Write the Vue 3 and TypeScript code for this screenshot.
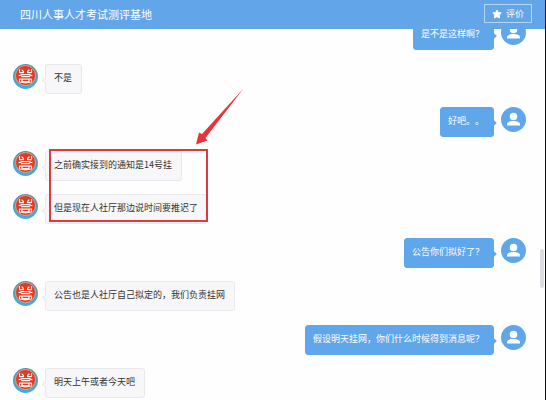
<script setup lang="ts">
interface Message {
  id: number
  from: 'agent' | 'user'
  text: string
}

const title = '四川人事人才考试测评基地'

const messages: Message[] = [
  { id: 1, from: 'user', text: '是不是这样啊？' },
  { id: 2, from: 'agent', text: '不是' },
  { id: 3, from: 'user', text: '好吧。。' },
  { id: 4, from: 'agent', text: '之前确实接到的通知是14号挂' },
  { id: 5, from: 'agent', text: '但是现在人社厅那边说时间要推迟了' },
  { id: 6, from: 'user', text: '公告你们拟好了？' },
  { id: 7, from: 'agent', text: '公告也是人社厅自己拟定的，我们负责挂网' },
  { id: 8, from: 'user', text: '假设明天挂网，你们什么时候得到消息呢？' },
  { id: 9, from: 'agent', text: '明天上午或者今天吧' },
]
</script>

<template>
  <div class="page">
    <header class="header">
      <h1 class="title">{{ title }}</h1>
      <button type="button" class="rate">
        <svg class="star" viewBox="0 0 20 20" aria-hidden="true">
          <path
            d="M10 2 12.600 7l5.900.9-4.300 4.100 1 6L10 15.200 4.800 18l1-6L1.500 7.900 7.400 7Z"
            fill="#fff"
            stroke="#fff"
            stroke-width="2"
            stroke-linejoin="round"
          />
        </svg>
        <span>评价</span>
      </button>
    </header>

    <main class="chat">
      <ul class="messages">
        <li v-for="m in messages" :key="m.id" class="row" :class="m.from">
          <svg v-if="m.from === 'agent'" class="avatar" viewBox="0 0 50 50" aria-hidden="true">
            <defs>
              <linearGradient :id="`ring-${m.id}`" x1="0" y1="0" x2="0" y2="1">
                <stop offset="0" stop-color="#75838f" />
                <stop offset="0.5" stop-color="#5b9dbb" />
                <stop offset="1" stop-color="#3fb0dc" />
              </linearGradient>
            </defs>
            <circle cx="25" cy="25" r="25" :fill="`url(#ring-${m.id})`" />
            <circle cx="25" cy="23" r="20" fill="#de3a24" stroke="#c8a9a0" stroke-width="2" />
            <g fill="none" stroke="#fff0e8" stroke-width="2.500" stroke-linecap="round" stroke-linejoin="round">
              <path d="M13 11v6h8M21 17q0-3-3-5M37 11v6h-8M29 17q0-3 3-5" />
              <path d="M12 23q4 0 6-2h14q2 2 6 2M17 25h16" />
              <path d="M13 35v-5h24v5M18 30v5h14v-5M13 36q12 3 24 0" />
            </g>
          </svg>
          <p class="bubble">{{ m.text }}</p>
          <svg v-if="m.from === 'user'" class="avatar" viewBox="0 0 50 50" aria-hidden="true">
            <circle cx="25" cy="25" r="25" fill="#5fa6ea" />
            <circle cx="25" cy="19" r="7.500" fill="#fff" />
            <path d="M12 37v-3c0-4 7-6 13-6s13 2 13 6v3Z" fill="#fff" />
          </svg>
        </li>
      </ul>

      <div class="highlight"></div>
      <svg class="arrow" viewBox="0 0 48 57" aria-hidden="true">
        <path d="M47.500 0.500 6 46 3 44.500 0 56.500 11.500 52.500 9.500 50Z" fill="#ea3338" />
      </svg>
      <div class="thumb"></div>
    </main>
  </div>
</template>

<style>
body {
  margin: 0;
  background: #fff;
}
</style>

<style scoped>
.page {
  display: flex;
  flex-direction: column;
  box-sizing: border-box;
  min-height: 100vh;
  border-right: 1px solid #111;
  background: #fefefe;
  color: #333;
  font-family: "Noto Sans CJK SC", sans-serif;
  font-size: 9px;
  text-spacing-trim: space-all;
}

.header {
  display: flex;
  align-items: center;
  justify-content: space-between;
  box-sizing: border-box;
  height: 29px;
  padding: 0 13px 2px 20px;
  background: #62a5e8;
  color: #fff;
}

.title {
  margin: 0;
  font-size: 11px;
  font-weight: 400;
  line-height: 16px;
}

.rate {
  display: flex;
  align-items: center;
  gap: 4px;
  height: 19px;
  padding: 0 7px;
  border: 1px solid #b5d6f7;
  background: transparent;
  color: #fff;
  font: inherit;
  line-height: 16px;
  cursor: pointer;
}

.star {
  width: 10px;
  height: 10px;
}

.chat {
  position: relative;
  flex: 1;
  overflow: hidden;
}

.messages {
  margin: -9px 0 0;
  padding: 0 19px 2px 13px;
  list-style: none;
}

.row {
  display: flex;
  align-items: flex-start;
  gap: 7px;
  margin-bottom: 13px;
}

.row:nth-child(odd) {
  margin-bottom: 14px;
}

.row:last-child {
  margin-bottom: 0;
}

.row.user {
  justify-content: flex-end;
}

.avatar {
  flex: none;
  width: 25px;
  height: 25px;
}

.bubble {
  position: relative;
  box-sizing: border-box;
  margin: 0;
  padding: 5px 9px 7px 8px;
  border: 1px solid #e9e9ed;
  border-radius: 3px;
  background: #f7f7f9;
  line-height: 16px;
}

.bubble::after {
  content: "";
  position: absolute;
  top: 13px;
  left: -3px;
  width: 4px;
  height: 4px;
  border: solid #e9e9ed;
  border-width: 0 0 1px 1px;
  background: #f7f7f9;
  transform: rotate(45deg);
}

.user .bubble {
  padding-left: 7px;
  border-color: #5fa6ea;
  background: #5fa6ea;
  color: #fff;
}

.user .bubble::after {
  right: -3px;
  left: auto;
  border: 0;
  background: #5fa6ea;
}

.highlight {
  position: absolute;
  top: 120px;
  left: 49px;
  box-sizing: border-box;
  width: 159px;
  height: 73px;
  border: 2px solid #dc3a3f;
}

.arrow {
  position: absolute;
  top: 59px;
  left: 196px;
  width: 48px;
  height: 57px;
}

.thumb {
  position: absolute;
  top: 220px;
  right: 1px;
  width: 4px;
  height: 39px;
  border-radius: 2px;
  background: #dddde1;
}
</style>
